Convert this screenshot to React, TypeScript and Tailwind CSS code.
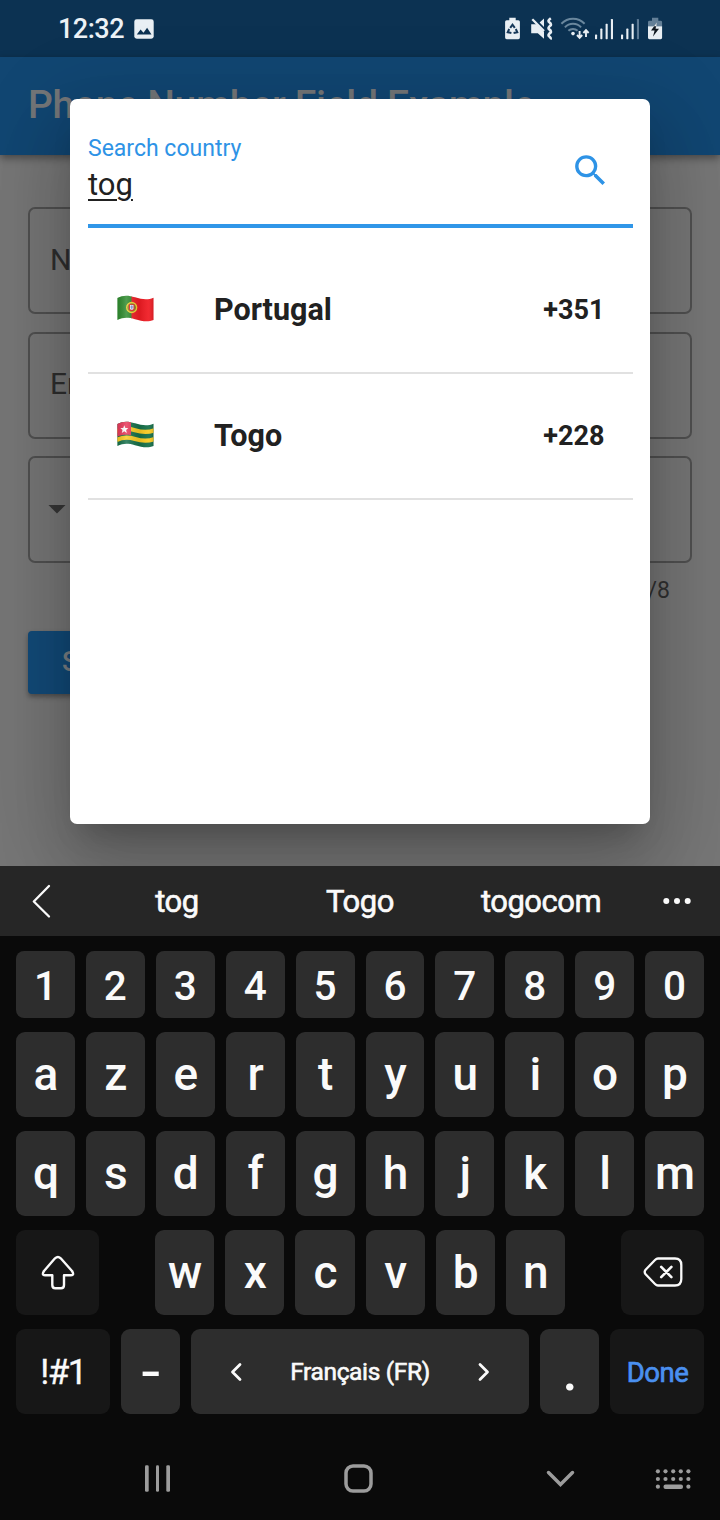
import React from "react";

const ROW_DIGITS = ["1", "2", "3", "4", "5", "6", "7", "8", "9", "0"];
const ROW_TOP = ["a", "z", "e", "r", "t", "y", "u", "i", "o", "p"];
const ROW_HOME = ["q", "s", "d", "f", "g", "h", "j", "k", "l", "m"];
const ROW_BOTTOM = ["w", "x", "c", "v", "b", "n"];

function SignalIcon({ weak }: { weak?: boolean }) {
  return (
    <svg width="20" height="23" viewBox="0 0 20 23" fill="#e9eff4">
      <rect x="1" y="17.6" width="2.1" height="4.6" rx=".6" />
      <rect x="6.3" y="11.6" width="2.1" height="10.6" rx=".6" />
      <rect x="11.6" y="6.8" width="2.1" height="15.4" rx=".6" />
      <rect x="16.9" y="2" width="2.1" height="20.2" rx=".6" fill={weak ? "#5d7a94" : "#e9eff4"} />
    </svg>
  );
}

function StatusBar() {
  return (
    <div className="flex h-[57px] shrink-0 items-center bg-[#0c3252] pl-[58px] pr-[57px]">
      <span className="pt-[2px] text-[27px] leading-none font-medium tracking-[-0.5px] text-[#edf2f6]">12:32</span>
      <svg className="ml-[10px]" width="20" height="20" viewBox="0 0 20 20">
        <rect x=".3" y=".3" width="19.4" height="19.4" rx="2.4" fill="#e9eff4" />
        <path d="M2.8 15.6 6.6 10.6l2.9 3.1 3.6-4.9 4.4 6.8z" fill="#0c3252" />
      </svg>
      <div className="ml-auto flex items-center">
        <svg width="17" height="23" viewBox="0 0 17 23">
          <path d="M5.3.8h6.4v2.4h2.6a1.6 1.6 0 0 1 1.6 1.6v15.8a1.6 1.6 0 0 1-1.6 1.6H2.7a1.6 1.6 0 0 1-1.6-1.6V4.8a1.6 1.6 0 0 1 1.6-1.6h2.6z" fill="#e9eff4" />
          <g fill="none" stroke="#17395a" strokeWidth="2">
            <path d="M6.2 10.800 8.500 7.600l2.300 3.200" />
            <path d="M11.800 12l1.500 3.300-3.700.7" />
            <path d="M5.200 12 3.700 15.300l3.700.7" />
          </g>
        </svg>
        <svg className="ml-[9px]" width="24" height="23" viewBox="0 0 24 23">
          <path d="M1.200 7.200h5.400l7.400 7.600v6.900l-6.200-5.400H1.200zM14 1.500v8.600L9.600 5.600z" fill="#e9eff4" />
          <path d="M2.300 2.300 14 14" stroke="#e9eff4" strokeWidth="2.300" />
          <path d="M20.800 1.200q-3.600 2.600-1.500 4.100t1.500 3q-3.600 2.600-1.500 4.100t1.500 3q-3.600 2.600-1.500 4.100t1 2.800" fill="none" stroke="#e9eff4" strokeWidth="2.600" />
        </svg>
        <svg className="ml-[6px]" width="31" height="23" viewBox="0 0 31 23">
          <g fill="none" stroke="#6a879d" strokeWidth="2">
            <path d="M1.400 6.800a16 16 0 0 1 23.200 0" />
            <path d="M4.900 10.400a11 11 0 0 1 16.200 0" />
            <path d="M8.400 13.800a6.600 6.600 0 0 1 9.200 0" />
          </g>
          <circle cx="13" cy="16.600" r="1.800" fill="#e9eff4" />
          <g fill="none" stroke="#e9eff4" strokeWidth="1.900">
            <path d="M19.600 14v6.800M17 18l2.600 2.800 2.600-2.800" />
            <path d="M26 20v-6.800M23.400 16l2.600-2.800 2.600 2.800" />
          </g>
        </svg>
        <div className="ml-[3px]"><SignalIcon /></div>
        <div className="ml-[6px]"><SignalIcon weak /></div>
        <svg className="ml-[7px]" width="16" height="23" viewBox="0 0 16 23">
          <path d="M5 .8h6.300v3h2.400a1.400 1.400 0 0 1 1.400 1.400v4H1V5.200a1.400 1.400 0 0 1 1.400-1.400H5z" fill="#637f97" />
          <path d="M1 9.200h14.100v11.600a1.400 1.400 0 0 1-1.400 1.400H2.400A1.400 1.400 0 0 1 1 20.800z" fill="#e9eff4" />
          <path d="M9.600 6 4 13.600h3.600L6 19.600l6-7.800H8.600z" fill="#101820" />
          <path d="M9.800 5.600 7 9.200h2.400z" fill="#e9eff4" />
        </svg>
      </div>
    </div>
  );
}

function Field({ label }: { label: string }) {
  return (
    <div className="flex h-[107px] items-center rounded-[7px] border-2 border-[#505050] pl-[20px] pb-[2px] text-[30px] leading-none text-[#2e2e2e]">
      {label}
    </div>
  );
}

function FormPage() {
  return (
    <>
      <header className="relative flex h-[98px] shrink-0 items-center bg-[#114672] pl-[28px] pb-[2px] shadow-[0_3px_8px_rgba(0,0,0,0.4)]">
        <h1 className="text-[39px] leading-none font-medium tracking-[-0.29px] whitespace-nowrap text-[#747678]">Phone Number Field Example</h1>
      </header>
      <main className="flex flex-1 flex-col px-[28px] pt-[52px]">
        <div className="flex flex-col gap-[17.500px]">
          <Field label="Name" />
          <Field label="Email" />
          <div className="flex h-[107px] items-center rounded-[7px] border-2 border-[#505050] pl-[18px]">
            <svg width="18" height="9" viewBox="0 0 18 9"><path d="M.5 0h17L9 8.600z" fill="#363636" /></svg>
          </div>
        </div>
        <div className="mt-[14px] pr-[22px] text-right text-[23px] leading-[28px] text-[#303030]">0/8</div>
        <div className="mt-[26px] flex h-[63px] w-[166px] items-center rounded-[4px] bg-[#124a78] pl-[34px] text-[27px] leading-none font-medium text-[#7b8085] shadow-[0_3px_5px_rgba(0,0,0,0.35)]">
          Submit
        </div>
      </main>
    </>
  );
}

function Flag({ children, id }: { children: React.ReactNode; id: string }) {
  return (
    <svg width="37" height="27" viewBox="0 0 37 27">
      <defs>
        <clipPath id={id}>
          <path d="M.4 2.900C6 .1 11 .1 18 2.300S31 5 36.500 2.700V25C31 27.300 25 26.300 18 24.200S6 22.200.4 25z" />
        </clipPath>
        <linearGradient id={id + "-shade"} x1="0" x2="1" y1="0" y2="0">
          <stop offset="0" stopColor="#000" stopOpacity=".08" />
          <stop offset=".25" stopColor="#fff" stopOpacity=".16" />
          <stop offset=".62" stopColor="#000" stopOpacity=".08" />
          <stop offset=".85" stopColor="#fff" stopOpacity=".06" />
          <stop offset="1" stopColor="#000" stopOpacity=".14" />
        </linearGradient>
      </defs>
      <g clipPath={"url(#" + id + ")"}>
        {children}
        <rect width="37" height="27" fill={"url(#" + id + "-shade)"} />
      </g>
    </svg>
  );
}

function PortugalFlag() {
  return (
    <Flag id="flag-pt">
      <rect width="15" height="27" fill="#2e8b2e" />
      <rect x="14.500" width="23" height="27" fill="#f01c24" />
      <circle cx="14.700" cy="12.500" r="5" fill="#8a8a20" stroke="#f3cf30" strokeWidth="1.300" />
      <path d="M11.900 9.300h5.600v4a2.800 2.800 0 0 1-5.600 0z" fill="#e8262c" />
      <path d="M13 10h3.500v3.200a1.750 1.750 0 0 1-3.500 0z" fill="#eef0ff" />
      <path d="M14.750 10.400v4M13.400 12h2.700" stroke="#5870b8" strokeWidth=".7" />
    </Flag>
  );
}

function TogoFlag() {
  return (
    <Flag id="flag-tg">
      <rect width="37" height="27" fill="#16704a" />
      <g fill="none" stroke="#fbcb22" strokeWidth="4.300">
        <path d="M-.5 10.300C6 7 11 7 18 9.200S31 11.800 37.500 9.200" />
        <path d="M-.5 19C6 15.800 11 15.800 18 18S31 20.600 37.500 18" />
      </g>
      <path d="M0 0h14v14.200c-5-.8-9-.4-14 1.600z" fill="#e8385a" />
      <path d="M7.300 4.200 8.400 6.900l2.900.2-2.200 1.900.7 2.900-2.500-1.600-2.500 1.600.7-2.900-2.200-1.900 2.900-.2z" fill="#fff" />
    </Flag>
  );
}

function CountryRow({ flag, name, code }: { flag: React.ReactNode; name: string; code: string }) {
  return (
    <div className="flex h-[126px] items-center border-b-2 border-[#e1e1e1] pr-[28px] pl-[29.500px] font-bold text-[#212121]">
      <div className="pb-[4px]">{flag}</div>
      <span className="ml-[60px] text-[30.500px] leading-none">{name}</span>
      <span className="ml-auto text-[27px] leading-none">{code}</span>
    </div>
  );
}

function CountryDialog() {
  return (
    <div className="absolute top-[99px] left-[70px] flex h-[725px] w-[580px] flex-col rounded-[7px] bg-white px-[17.500px] shadow-[0_20px_28px_-13px_rgba(0,0,0,0.2),0_45px_70px_6px_rgba(0,0,0,0.14),0_17px_85px_15px_rgba(0,0,0,0.12)]">
      <div className="flex h-[129px] justify-between border-b-[4px] border-[#3096e8] pt-[36px]">
        <div className="flex flex-col items-start pl-[0.500px]">
          <span className="text-[23px] leading-[28px] text-[#2e93e6]">Search country</span>
          <span className="mt-[3px] text-[31px] leading-[38px] text-[#212121] underline decoration-[1.500px] underline-offset-4">tog</span>
        </div>
        <svg className="mt-[15px] mr-[22px]" width="41" height="41" viewBox="0 0 24 24" fill="#2e93e6">
          <path d="M15.500 14h-.79l-.28-.27A6.471 6.471 0 0 0 16 9.500 6.500 6.500 0 1 0 9.500 16c1.610 0 3.090-.59 4.230-1.570l.27.28v.79l5 4.990L20.490 19l-4.990-5zm-6 0C7.010 14 5 11.990 5 9.500S7.010 5 9.500 5 14 7.010 14 9.500 11.990 14 9.500 14z" />
        </svg>
      </div>
      <div className="mt-[20px] flex flex-col">
        <CountryRow flag={<PortugalFlag />} name="Portugal" code="+351" />
        <CountryRow flag={<TogoFlag />} name="Togo" code="+228" />
      </div>
    </div>
  );
}

function LetterKey({ label }: { label: string }) {
  return (
    <button className="flex h-[85px] items-center justify-center rounded-[9px] bg-[#2d2d2d] pb-[2px] pl-[1px] text-[46px] leading-none font-medium text-[#fafafa]">
      {label}
    </button>
  );
}

function Keyboard() {
  return (
    <div className="flex flex-1 flex-col bg-[#0a0a0a]">
      <div className="flex h-[70px] shrink-0 items-center bg-[#262626] text-[31px] leading-none tracking-[-0.5px] text-[#fafafa] [-webkit-text-stroke:0.6px_#fafafa]">
        <svg className="ml-[31px]" width="21" height="36" viewBox="0 0 21 36" fill="none" stroke="#fafafa" strokeWidth="2.300" strokeLinecap="round" strokeLinejoin="round">
          <path d="M18 3 2.800 18.500 18 33.500" />
        </svg>
        <span className="ml-[34px] w-[182px] pt-[1px] text-center">tog</span>
        <span className="w-[184px] pt-[1px] text-center">Togo</span>
        <span className="w-[178px] pt-[1px] text-center">togocom</span>
        <svg className="ml-[32px]" width="30" height="8" viewBox="0 0 30 8" fill="#fafafa">
          <circle cx="4.300" cy="4" r="3" />
          <circle cx="15" cy="4" r="3" />
          <circle cx="25.700" cy="4" r="3" />
        </svg>
      </div>
      <div className="flex flex-col gap-[14px] px-[16px] pt-[15px]">
        <div className="grid grid-cols-10 gap-[11px]">
          {ROW_DIGITS.map((k) => (
            <button key={k} className="flex h-[67px] items-center justify-center rounded-[8px] bg-[#2d2d2d] pt-[4px] text-[40.500px] leading-none font-medium text-[#fafafa]">
              {k}
            </button>
          ))}
        </div>
        <div className="grid grid-cols-10 gap-[11px]">
          {ROW_TOP.map((k) => <LetterKey key={k} label={k} />)}
        </div>
        <div className="grid grid-cols-10 gap-[11px]">
          {ROW_HOME.map((k) => <LetterKey key={k} label={k} />)}
        </div>
        <div className="flex justify-between">
          <button className="flex h-[85px] w-[83px] items-center justify-center rounded-[9px] bg-[#171717]">
            <svg width="34" height="36" viewBox="0 0 34 36" fill="none" stroke="#fafafa" strokeWidth="2.400" strokeLinejoin="round">
              <path d="M14 3.300Q17 .7 19.700 3.300L31 16Q33.700 20.300 30 20.300H23V30Q23 33.300 20 33.300H14.300Q11.300 33.300 11.300 30V20.300H4Q.3 20.300 3 16Z" />
            </svg>
          </button>
          <div className="grid w-[410px] grid-cols-6 gap-[11px]">
            {ROW_BOTTOM.map((k) => <LetterKey key={k} label={k} />)}
          </div>
          <button className="flex h-[85px] w-[83px] items-center justify-center rounded-[9px] bg-[#171717] pb-[1px]">
            <svg width="40" height="32" viewBox="0 0 40 32" fill="none" stroke="#fafafa" strokeWidth="2.300" strokeLinejoin="round" strokeLinecap="round">
              <path d="M15 2.500H32Q38.300 2.500 38.300 9V23Q38.300 29.500 32 29.500H15Q13.500 29.500 12 28L2.600 18.300Q.8 16 2.600 13.700L12 4Q13.500 2.500 15 2.500Z" />
              <path d="M18.200 10.900l10.200 10.200M28.400 10.900 18.200 21.100" strokeWidth="2.600" />
            </svg>
          </button>
        </div>
        <div className="flex gap-[11px]">
          <button className="flex h-[85px] w-[94px] items-center justify-center rounded-[9px] bg-[#171717] pt-[2px] text-[35px] leading-none tracking-[-1.500px] text-[#fafafa] [-webkit-text-stroke:0.3px_#fafafa]">!#1</button>
          <button className="flex h-[85px] w-[59px] items-center justify-center rounded-[9px] bg-[#2d2d2d] text-[46px] leading-none font-medium text-[#fafafa]">
            <span className="scale-x-[1.350]">-</span>
          </button>
          <button className="flex h-[85px] w-[338px] items-center justify-center rounded-[9px] bg-[#2d2d2d] text-[24.500px] leading-none tracking-[-0.350px] text-[#fafafa] [-webkit-text-stroke:0.6px_#fafafa]">
            <svg width="12" height="20" viewBox="0 0 12 20" fill="none" stroke="#fafafa" strokeWidth="2.800" strokeLinecap="round" strokeLinejoin="round"><path d="M10 2.500 2.500 10 10 17.500" /></svg>
            <span className="w-[236px] pt-[1px] text-center">Français (FR)</span>
            <svg width="12" height="20" viewBox="0 0 12 20" fill="none" stroke="#fafafa" strokeWidth="2.800" strokeLinecap="round" strokeLinejoin="round"><path d="M2 2.500 9.500 10 2 17.500" /></svg>
          </button>
          <button className="flex h-[85px] w-[59px] items-center justify-center rounded-[9px] bg-[#2d2d2d] pt-[1px] pl-[1px] text-[54px] leading-none font-medium text-[#fafafa]">.</button>
          <button className="flex h-[85px] w-[94px] items-center justify-center rounded-[9px] bg-[#171717] pt-[3px] pl-[1px] text-[27.500px] leading-none tracking-[-0.500px] text-[#4a90f0] [-webkit-text-stroke:0.7px_#4a90f0]">Done</button>
        </div>
      </div>
      <nav className="flex flex-1 items-center pt-[23px]">
        <svg className="ml-[144px]" width="27" height="29" viewBox="0 0 27 29" fill="#9c9c9c">
          <rect x="1" y="1.300" width="3.700" height="26.500" rx="1.300" />
          <rect x="12" y="1.300" width="3" height="26.500" rx="1.300" />
          <rect x="22.300" y="1.300" width="3.700" height="26.500" rx="1.300" />
        </svg>
        <svg className="ml-[172px]" width="31" height="31" viewBox="0 0 31 31" fill="none" stroke="#9c9c9c" strokeWidth="3.500">
          <rect x="3" y="3" width="25" height="25" rx="7" />
        </svg>
        <svg className="ml-[171px]" width="30" height="20" viewBox="0 0 30 20" fill="none" stroke="#9c9c9c" strokeWidth="3.500" strokeLinecap="round">
          <path d="M3.500 3.500 15.500 15.500 27.500 3.500" />
        </svg>
        <svg className="ml-[80px]" width="37" height="22" viewBox="0 0 37 22" fill="#9c9c9c">
          {[2.900, 10.500, 18.200, 25.800, 33.400].map((x) => (
            <g key={x}>
              <circle cx={x} cy="3.300" r="2.100" />
              <circle cx={x} cy="11" r="2.100" />
            </g>
          ))}
          <circle cx="2.900" cy="18.700" r="2.100" />
          <circle cx="33.400" cy="18.700" r="2.100" />
          <rect x="8.500" y="16.600" width="19.500" height="4.300" rx="2" />
        </svg>
      </nav>
    </div>
  );
}

export default function App() {
  return (
    <div className="flex h-[1520px] w-[720px] flex-col overflow-hidden font-['Roboto',sans-serif]">
      <div className="relative flex h-[866px] shrink-0 flex-col overflow-hidden bg-[#767676]">
        <StatusBar />
        <FormPage />
        <CountryDialog />
      </div>
      <Keyboard />
    </div>
  );
}
